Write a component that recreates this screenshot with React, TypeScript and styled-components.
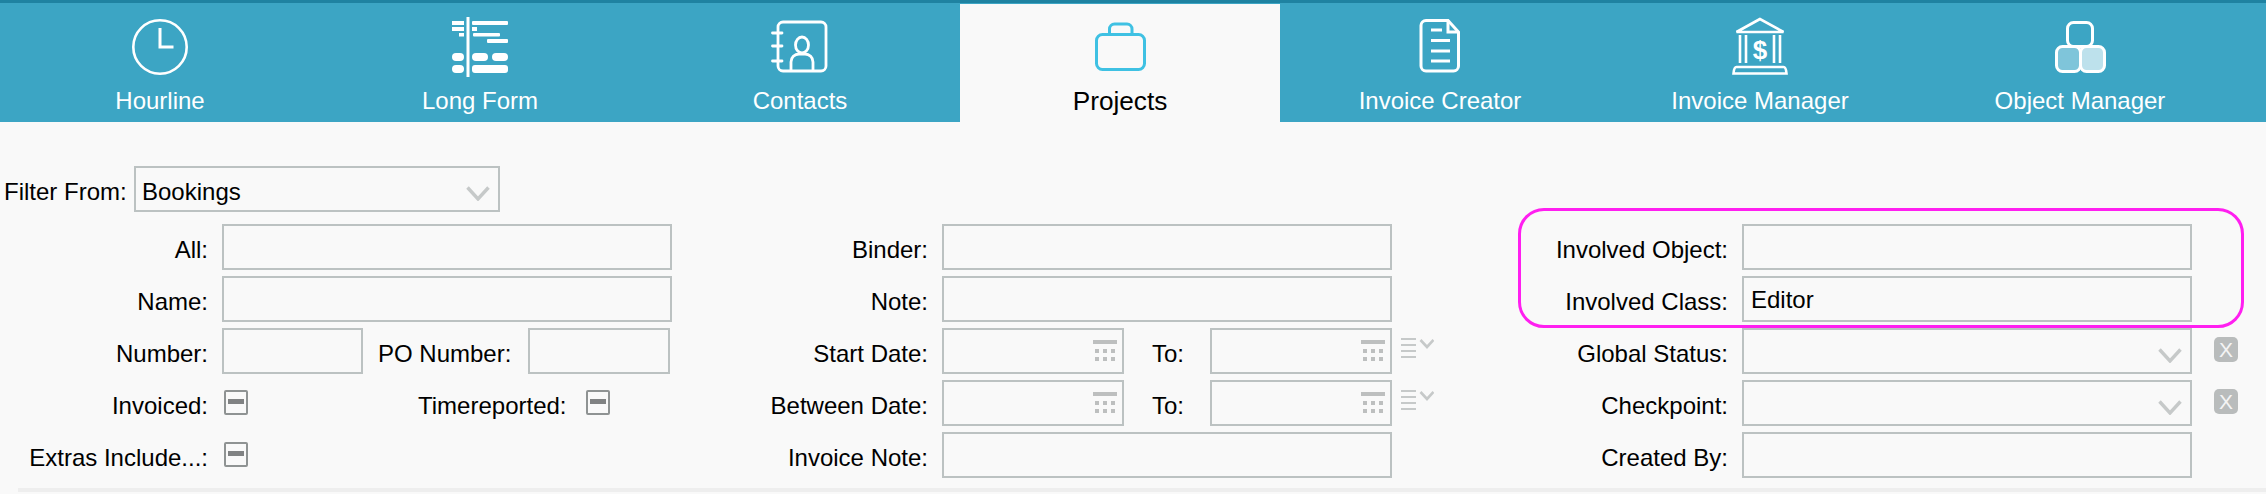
import React from 'react';
import styled, {createGlobalStyle} from 'styled-components';

const GlobalStyle = createGlobalStyle`
  html, body {
    margin: 0;
    padding: 0;
    background: #f9f9f9;
    font-family: "Liberation Sans", Arial, sans-serif;
    overflow: hidden;
  }
`

const ClockIcon = () => (
    <TabIcon viewBox="0 0 64 64" fill="none" stroke="currentColor" strokeWidth="2.6">
        <circle cx="32" cy="32" r="26.7"/>
        <path d="M32 13V32H45.5" strokeWidth="3"/>
    </TabIcon>
);

const LongFormIcon = () => (
    <TabIcon viewBox="0 0 64 64" fill="currentColor">
        <rect x="18.5" y="2" width="3" height="60"/>
        <rect x="4" y="6" width="12" height="4"/>
        <rect x="24" y="6" width="36" height="4" rx="1"/>
        <rect x="4" y="12" width="12" height="4"/>
        <rect x="24" y="12" width="5" height="4"/>
        <rect x="11" y="18" width="5" height="3.5"/>
        <rect x="25" y="18" width="27" height="3.5" rx="1"/>
        <rect x="39" y="24" width="21" height="4" rx="1"/>
        <rect x="4" y="38" width="12" height="8" rx="4"/>
        <rect x="24" y="38" width="16" height="8" rx="4"/>
        <rect x="44" y="38" width="16" height="8" rx="4"/>
        <rect x="4" y="50" width="12" height="8" rx="4"/>
        <rect x="24" y="50" width="36" height="8" rx="3"/>
    </TabIcon>
);

const ContactsIcon = () => (
    <TabIcon viewBox="0 0 64 64" fill="none" stroke="currentColor" strokeWidth="2.8">
        <path d="M10 14V12a5 5 0 0 1 5-5H53a5 5 0 0 1 5 5V51a5 5 0 0 1-5 5H15a5 5 0 0 1-5-5V14Z"/>
        <path d="M4.500 18H14M4.500 31H14M4.500 46H14" strokeLinecap="round"/>
        <ellipse cx="34" cy="30" rx="6.500" ry="8"/>
        <path d="M23 56V47a8 8 0 0 1 8-8H37a8 8 0 0 1 8 8V56"/>
    </TabIcon>
);

const BagIcon = () => (
    <TabIcon viewBox="0 0 64 64" fill="none" stroke="currentColor" strokeWidth="3">
        <rect x="8.500" y="19.500" width="48" height="35" rx="6"/>
        <path d="M21.500 19V14a5 5 0 0 1 5-5H39a5 5 0 0 1 5 5V19"/>
    </TabIcon>
);

const DocIcon = () => (
    <TabIcon viewBox="0 0 64 64" fill="none" stroke="currentColor" strokeWidth="3">
        <path d="M18 5.500H40L50.500 17V51a5 5 0 0 1-5 5H18a5 5 0 0 1-5-5V10.500a5 5 0 0 1 5-5Z"/>
        <path d="M40 5.500V17H50.500"/>
        <path d="M23 15H34M23 25.500H42M23 36H42M23 46H42"/>
    </TabIcon>
);

const BankIcon = () => (
    <TabIcon viewBox="0 0 64 64" fill="none" stroke="currentColor" strokeWidth="2.6">
        <path d="M32 4L8.500 17H55.500Z"/>
        <path d="M12 20V48M18 20V48M46 20V48M52 20V48"/>
        <path d="M8.500 52H55.500Q58 52 58.500 58.500H5.500Q6 52 8.500 52Z"/>
        <text x="32" y="44" fontSize="26" fontWeight="700" textAnchor="middle" fill="currentColor" stroke="none">$</text>
    </TabIcon>
);

const BlocksIcon = () => (
    <TabIcon viewBox="0 0 64 64" fill="none" stroke="currentColor" strokeWidth="3">
        <rect x="19.500" y="7.500" width="25" height="24" rx="6"/>
        <rect x="8.500" y="31.500" width="24" height="25" rx="6" fill="#7fc5da"/>
        <rect x="32.500" y="31.500" width="24" height="25" rx="6" fill="#bde1ec"/>
    </TabIcon>
);

const Chevron = () => (
    <ChevronSvg viewBox="0 0 24 15" fill="none" stroke="#c6c9c9" strokeWidth="3.4">
        <path d="M1.500 1.500L12 13L22.500 1.500"/>
    </ChevronSvg>
);

const CalendarIcon = () => (
    <CalendarSvg viewBox="0 0 24 24" fill="#bdbfbf">
        <rect x="0" y="0" width="24" height="4"/>
        {[2, 10, 18].map(x => (
            <React.Fragment key={x}>
                <rect x={x} y="9" width="4" height="4"/>
                <rect x={x} y="17" width="4" height="4"/>
            </React.Fragment>
        ))}
    </CalendarSvg>
);

const ListMenuIcon = () => (
    <MenuSvg viewBox="0 0 33 21" fill="none" stroke="#c6c9c9" strokeWidth="2">
        <path d="M0 1H15M0 7H15M0 13H15M0 19H15"/>
        <path d="M19.500 2L26 9L32.500 2" strokeWidth="2.6"/>
    </MenuSvg>
);

const tabs = [
    {label: 'Hourline', icon: <ClockIcon/>},
    {label: 'Long Form', icon: <LongFormIcon/>},
    {label: 'Contacts', icon: <ContactsIcon/>},
    {label: 'Projects', icon: <BagIcon/>, active: true},
    {label: 'Invoice Creator', icon: <DocIcon/>},
    {label: 'Invoice Manager', icon: <BankIcon/>},
    {label: 'Object Manager', icon: <BlocksIcon/>},
];

const DateField = () => (
    <DateBox>
        <CalendarIcon/>
    </DateBox>
);

const Tristate = () => (
    <CheckBox>
        <CheckDash/>
    </CheckBox>
);

const App = () => {
    return (
        <>
            <GlobalStyle/>
            <TabBar>
                {tabs.map(tab => (
                    <Tab key={tab.label} $active={tab.active}>
                        {tab.icon}
                        <TabLabel $active={tab.active}>{tab.label}</TabLabel>
                    </Tab>
                ))}
            </TabBar>

            <FilterRow>
                <FilterLabel>Filter From:</FilterLabel>
                <SelectBox $width={366}>
                    <SelectValue>Bookings</SelectValue>
                    <Chevron/>
                </SelectBox>
            </FilterRow>

            <Columns>
                <Column>
                    <Row>
                        <Label>All:</Label>
                        <Input $width={450}/>
                    </Row>
                    <Row>
                        <Label>Name:</Label>
                        <Input $width={450}/>
                    </Row>
                    <Row>
                        <Label>Number:</Label>
                        <Input $width={141}/>
                        <InlineLabel $left={15}>PO Number:</InlineLabel>
                        <Input $width={142}/>
                    </Row>
                    <Row>
                        <Label>Invoiced:</Label>
                        <Tristate/>
                        <InlineLabel $left={170}>Timereported:</InlineLabel>
                        <Tristate/>
                    </Row>
                    <Row>
                        <Label>Extras Include...:</Label>
                        <Tristate/>
                    </Row>
                </Column>

                <Column>
                    <Row>
                        <Label>Binder:</Label>
                        <Input $width={450}/>
                    </Row>
                    <Row>
                        <Label>Note:</Label>
                        <Input $width={450}/>
                    </Row>
                    <Row>
                        <Label>Start Date:</Label>
                        <DateField/>
                        <ToLabel>To:</ToLabel>
                        <DateField/>
                        <ListMenuIcon/>
                    </Row>
                    <Row>
                        <Label>Between Date:</Label>
                        <DateField/>
                        <ToLabel>To:</ToLabel>
                        <DateField/>
                        <ListMenuIcon/>
                    </Row>
                    <Row>
                        <Label>Invoice Note:</Label>
                        <Input $width={450}/>
                    </Row>
                </Column>

                <Column>
                    <Highlight/>
                    <Row>
                        <Label>Involved Object:</Label>
                        <Input $width={450}/>
                    </Row>
                    <Row>
                        <Label>Involved Class:</Label>
                        <Input $width={450} defaultValue="Editor"/>
                    </Row>
                    <Row>
                        <Label>Global Status:</Label>
                        <SelectBox $width={450}>
                            <Chevron/>
                        </SelectBox>
                        <ClearButton>X</ClearButton>
                    </Row>
                    <Row>
                        <Label>Checkpoint:</Label>
                        <SelectBox $width={450}>
                            <Chevron/>
                        </SelectBox>
                        <ClearButton>X</ClearButton>
                    </Row>
                    <Row>
                        <Label>Created By:</Label>
                        <Input $width={450}/>
                    </Row>
                </Column>
            </Columns>

            <BottomRule/>
        </>
    );
};

export default App;


const TabBar = styled.div`
  display: flex;
  height: 122px;
  box-sizing: border-box;
  padding-top: 1px;
  background-color: #3ca5c4;
  border-top: 3px solid #1f82a1;
`

const Tab = styled.div<{ $active?: boolean }>`
  width: 320px;
  box-sizing: border-box;
  display: flex;
  flex-direction: column;
  align-items: center;
  padding-top: 11px;
  color: ${props => props.$active ? '#3fc1e3' : '#fff'};
  background-color: ${props => props.$active ? '#f9f9f9' : 'transparent'};
`

const TabIcon = styled.svg`
  width: 64px;
  height: 64px;
  flex-shrink: 0;
`

const TabLabel = styled.div<{ $active?: boolean }>`
  margin-top: 7px;
  font-size: ${props => props.$active ? '26.2px' : '24px'};
  line-height: 30px;
  color: ${props => props.$active ? '#000' : '#fff'};
  white-space: nowrap;
`

const FilterRow = styled.div`
  display: flex;
  margin-top: 44px;
  padding-left: 4px;
`

const FilterLabel = styled.div`
  width: 130px;
  font-size: 24px;
  line-height: 46px;
  padding-top: 3px;
  height: 43px;
  color: #000;
  white-space: nowrap;
`

const Columns = styled.div`
  display: grid;
  grid-template-columns: 720px 800px 1fr;
  margin-top: 12px;
`

const Column = styled.div`
  position: relative;
  display: flex;
  flex-direction: column;
  gap: 6px;
`

const Row = styled.div`
  display: flex;
  align-items: flex-start;
  height: 46px;
`

const Label = styled.div`
  width: 208px;
  margin-right: 14px;
  padding-top: 3px;
  font-size: 24px;
  line-height: 46px;
  height: 43px;
  text-align: right;
  color: #000;
  white-space: nowrap;
`

const InlineLabel = styled.div<{ $left: number }>`
  margin-left: ${props => props.$left}px;
  margin-right: 17px;
  padding-top: 3px;
  font-size: 24px;
  line-height: 46px;
  height: 43px;
  color: #000;
  white-space: nowrap;
`

const ToLabel = styled.div`
  width: 35px;
  margin-left: 28px;
  margin-right: 23px;
  padding-top: 3px;
  font-size: 24px;
  line-height: 46px;
  height: 43px;
  color: #000;
`

const Input = styled.input<{ $width: number }>`
  display: block;
  box-sizing: border-box;
  width: ${props => props.$width}px;
  height: 46px;
  padding: 2px 7px 0;
  border: 2px solid #bcc2c2;
  border-radius: 0;
  outline: none;
  background: transparent;
  font-family: "Liberation Sans", Arial, sans-serif;
  font-size: 24px;
  color: #000;
`

const SelectBox = styled.div<{ $width: number }>`
  box-sizing: border-box;
  display: flex;
  align-items: center;
  justify-content: flex-end;
  width: ${props => props.$width}px;
  height: 46px;
  padding: 0 8px 0 6px;
  border: 2px solid #bcc2c2;
`

const SelectValue = styled.div`
  flex: 1;
  padding-top: 5px;
  font-size: 24px;
  color: #000;
`

const ChevronSvg = styled.svg`
  width: 24px;
  height: 15px;
  margin-top: 8px;
`

const DateBox = styled.div`
  box-sizing: border-box;
  display: flex;
  justify-content: flex-end;
  width: 182px;
  height: 46px;
  padding: 10px 5px 0 0;
  border: 2px solid #bcc2c2;
`

const CalendarSvg = styled.svg`
  width: 24px;
  height: 24px;
`

const MenuSvg = styled.svg`
  width: 33px;
  height: 21px;
  margin-left: 9px;
  margin-top: 10px;
`

const CheckBox = styled.div`
  box-sizing: border-box;
  display: flex;
  align-items: center;
  justify-content: center;
  width: 24px;
  height: 25px;
  margin: 10px 0 0 2px;
  border: 2px solid #8f9393;
  border-radius: 2px;
`

const CheckDash = styled.div`
  width: 16px;
  height: 5px;
  margin-top: -2px;
  background-color: #808283;
`

const ClearButton = styled.div`
  width: 24px;
  height: 25px;
  margin: 9px 0 0 22px;
  border-radius: 5px;
  background-color: #b9bcbc;
  color: #f4f4f4;
  font-size: 21px;
  line-height: 25px;
  text-align: center;
`

const Highlight = styled.div`
  position: absolute;
  left: -2px;
  top: -16px;
  width: 726px;
  height: 120px;
  box-sizing: border-box;
  border: 3px solid #ff1ff0;
  border-radius: 26px;
  pointer-events: none;
`

const BottomRule = styled.div`
  height: 4px;
  margin: 10px 0 0 18px;
  background-color: #eeeeee;
`
